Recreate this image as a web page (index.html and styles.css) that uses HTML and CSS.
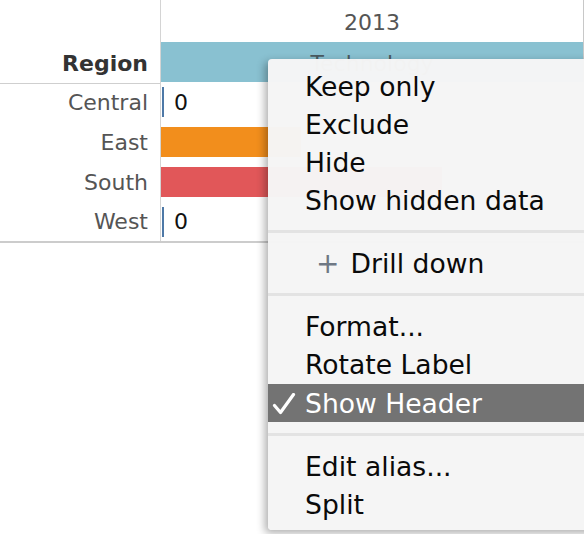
FILE: index.html
```html
<!DOCTYPE html>
<html>
<head>
<meta charset="utf-8">
<link rel="stylesheet" href="styles.css">
</head>
<body>
<div class="view">
  <div class="chart">
    <div class="row top">
      <div class="hdr"></div>
      <div class="plot col-title">2013</div>
    </div>
    <div class="row head">
      <div class="hdr region-title">Region</div>
      <div class="plot"><div class="cat">Technology</div></div>
    </div>
    <div class="row data">
      <div class="hdr label">Central</div>
      <div class="plot"><span class="tick"></span><span class="val">0</span></div>
    </div>
    <div class="row data">
      <div class="hdr label">East</div>
      <div class="plot"><span class="bar orange" style="width:140px"></span></div>
    </div>
    <div class="row data">
      <div class="hdr label">South</div>
      <div class="plot"><span class="bar red" style="width:281px"></span></div>
    </div>
    <div class="row data last">
      <div class="hdr label">West</div>
      <div class="plot"><span class="tick"></span><span class="val">0</span></div>
    </div>
  </div>

  <div class="menu">
    <div class="item">Keep only</div>
    <div class="item">Exclude</div>
    <div class="item">Hide</div>
    <div class="item">Show hidden data</div>
    <div class="sep"></div>
    <div class="item drill"><span class="plus">+</span>Drill down</div>
    <div class="sep"></div>
    <div class="item">Format...</div>
    <div class="item">Rotate Label</div>
    <div class="item checked"><svg class="check" width="24" height="22" viewBox="0 0 24 22"><polyline points="2.5,12.5 8.5,19.5 21.5,1.5" fill="none" stroke="#ffffff" stroke-width="3.2" stroke-linecap="round" stroke-linejoin="round"/></svg>Show Header</div>
    <div class="sep"></div>
    <div class="item">Edit alias...</div>
    <div class="item">Split</div>
  </div>
</div>
</body>
</html>
```

FILE: styles.css
```css
html, body {
  margin: 0;
  padding: 0;
  background: #ffffff;
}

.view {
  position: relative;
  width: 584px;
  height: 534px;
  overflow: hidden;
  font-family: "DejaVu Sans", sans-serif;
}

.chart {
  display: flex;
  flex-direction: column;
  width: 584px;
}

.row {
  display: flex;
  height: 40px;
}

.row.top {
  height: 42px;
}

.hdr {
  flex: none;
  width: 148px;
  border-right: 1px solid #d4d4d4;
  display: flex;
  align-items: center;
  justify-content: flex-end;
  padding-right: 12px;
}

.plot {
  flex: 1;
  display: flex;
  align-items: center;
  border-right: 1px solid #c8c8c8;
}

.col-title {
  justify-content: center;
  font-size: 22px;
  color: #555555;
  padding-top: 3px;
}

.head .hdr {
  border-bottom: 1px solid #cfcfcf;
  height: 39px;
}

.region-title {
  font-weight: bold;
  font-size: 22px;
  color: #333333;
  padding-top: 2px;
}

.cat {
  width: 100%;
  height: 40px;
  background: #89c1d1;
  color: #4a5a60;
  font-size: 22px;
  display: flex;
  align-items: center;
  justify-content: center;
  padding-top: 3px;
  box-sizing: border-box;
}

.label {
  font-size: 22px;
  color: #555555;
}

.data .plot {
  border-right: none;
}

.row.last {
  height: 39px;
  border-bottom: 2px solid #cccccc;
}

.tick {
  width: 2px;
  height: 30px;
  background: #4e79a7;
  margin-left: 1px;
}

.bar {
  height: 30px;
}

.orange { background: #f28e1c; }
.red { background: #e15759; }

.val {
  font-size: 22px;
  color: #111111;
  margin-left: 10px;
}

.menu {
  position: absolute;
  left: 268px;
  top: 59px;
  width: 340px;
  height: 471px;
  box-sizing: border-box;
  padding-top: 8px;
  background: rgba(245, 245, 245, 0.985);
  border-radius: 4px;
  box-shadow: -3px 3px 9px rgba(0, 0, 0, 0.32);
  font-family: "DejaVu Sans", sans-serif;
  font-size: 26.6px;
  color: #0a0a0a;
}

.item {
  height: 38px;
  display: flex;
  align-items: center;
  padding-left: 37px;
}

.sep {
  height: 3px;
  background: #e3e3e3;
  margin: 11px 0;
}

.drill {
  padding-left: 48px;
}

.plus {
  color: #6f7884;
  font-size: 28px;
  margin-right: 11px;
}

.checked {
  background: #737373;
  color: #ffffff;
  padding-left: 4px;
  margin-top: 1px;
}

.check {
  flex: none;
  margin-right: 9px;
  margin-top: 2px;
}
```
